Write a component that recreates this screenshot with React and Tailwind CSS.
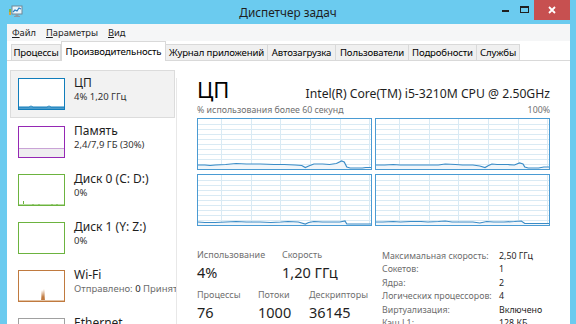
import React from 'react';

// точки графиков: [доля ширины, высота над низом в px]
const cpu1 = [[0,4],[0.04,4],[0.07,3.5],[0.1,4],[0.16,4.5],[0.22,5.5],[0.28,5],[0.36,5],[0.44,4.5],[0.5,4.5],[0.56,4],[0.6,3.5],[0.62,1.5],[0.64,3],[0.67,5],[0.72,5],[0.76,4.5],[0.8,5.5],[0.83,8],[0.845,7],[0.86,2],[0.88,1],[0.95,1],[0.97,1.5],[1,1.5]];
const cpu2 = [[0,4],[0.05,4],[0.1,4.5],[0.14,4],[0.2,4],[0.28,4],[0.36,4],[0.4,5],[0.46,4.5],[0.5,4],[0.56,4],[0.6,3],[0.63,1.5],[0.65,3.5],[0.67,5],[0.7,4.5],[0.76,4.5],[0.8,4],[0.83,6],[0.85,5],[0.86,2],[0.88,1],[0.94,1],[0.97,2],[1,2]];
const cpu3 = [[0,3],[0.04,2.5],[0.1,2.5],[0.16,3],[0.22,3.5],[0.28,3],[0.36,3],[0.42,2.5],[0.48,3],[0.52,3.5],[0.58,3],[0.62,1],[0.64,2.5],[0.67,3.5],[0.72,3],[0.78,3],[0.82,3],[0.85,4],[0.86,1],[0.9,1],[1,1]];
const cpu4 = [[0,3],[0.04,3],[0.1,3.5],[0.14,3],[0.2,3.5],[0.26,3.5],[0.3,3],[0.36,3.5],[0.4,4],[0.44,3],[0.5,3],[0.56,3],[0.6,2],[0.64,3.5],[0.68,3],[0.74,3],[0.8,3.5],[0.84,4],[0.86,1.5],[0.9,1.5],[1,1.5]];

const toPath = (pts, w, h) =>
  pts.map(([x, y], i) => `${i ? 'L' : 'M'}${(x * w).toFixed(1)},${(h - y).toFixed(1)}`).join(' ');

const BigGraph = ({ pts }) => {
  const w = 173, h = 50;
  const d = toPath(pts, w, h);
  return (
    <div className="h-[52px] border border-[#4a9bd3] bg-white">
      <svg width={w} height={h} className="block">
        {[5, 10, 15, 20, 25, 30, 35, 40, 45].map((y) => (
          <line key={y} x1="0" x2={w} y1={y + 0.5} y2={y + 0.5} stroke="#d9eaf4" />
        ))}
        {[23, 53, 82, 112, 142, 171].map((x) => (
          <line key={x} x1={x + 0.5} x2={x + 0.5} y1="0" y2={h} stroke="#d9eaf4" />
        ))}
        <path d={`${d} L${w},${h} L0,${h} Z`} fill="#f1f6fa" />
        <path d={d} fill="none" stroke="#3a8cc7" strokeWidth="1.2" />
      </svg>
    </div>
  );
};

const MiniGraph = ({ color, children }) => (
  <div className="w-[47px] h-[32px] shrink-0 border" style={{ borderColor: color }}>
    <svg width="45" height="30" className="block bg-white">{children}</svg>
  </div>
);

const SideItem = ({ graph, name, sub, selected }) => (
  <div
    className={`w-[165px] h-[48px] shrink-0 flex items-start pt-[7px] pl-[7px] border ${
      selected ? 'bg-[#f2f2f2] border-[#dcdcdc]' : 'border-transparent'
    }`}
  >
    {graph}
    <div className="ml-[9px] -mt-[3px] flex flex-col min-w-0">
      <span className="text-[12px] leading-[16px] text-[#1e1e1e] whitespace-nowrap">{name}</span>
      <span className="text-[9.5px] leading-[12px] text-[#333] whitespace-nowrap">{sub}</span>
    </div>
  </div>
);

const tabs = [
  ['Процессы', 'w-[50px]'],
  ['Производительность', 'w-[105px]'],
  ['Журнал приложений', 'w-[102px]'],
  ['Автозагрузка', 'w-[68px]'],
  ['Пользователи', 'w-[73px]'],
  ['Подробности', 'w-[68px]'],
  ['Службы', 'w-[43px]'],
];

const specs = [
  ['Максимальная скорость:', '2,50 ГГц'],
  ['Сокетов:', '1'],
  ['Ядра:', '2'],
  ['Логических процессоров:', '4'],
  ['Виртуализация:', 'Включено'],
  ['Кэш L1:', '128 КБ'],
];

const Stat = ({ label, value, w }) => (
  <div className={`${w} flex flex-col`}>
    <span className="text-[9px] leading-[12px] text-[#707070] whitespace-nowrap">{label}</span>
    <span className="mt-[1px] text-[14.5px] leading-[20px] text-[#1e1e1e] whitespace-nowrap">{value}</span>
  </div>
);

export default function App() {
  return (
    <div className="w-[576px] h-[324px] overflow-hidden bg-[#6bcbef] flex flex-col font-['Noto_Sans',sans-serif] text-black">
      {/* заголовок окна */}
      <div className="h-[24px] shrink-0 grid grid-cols-[1fr_auto_1fr] items-start">
        <div className="pl-[9px] pt-[5px]">
          <svg width="14" height="13" viewBox="0 0 14 13">
            <rect x="3" y="1" width="10" height="8" fill="#e8f4fb" stroke="#6f8797" />
            <path d="M4 7 L6 5 L8 6 L10 3 L12 4" fill="none" stroke="#2b7fc2" strokeWidth="1.2" />
            <rect x="6.5" y="9" width="3" height="2" fill="#8a9aa5" />
            <rect x="5" y="11" width="6" height="1" fill="#8a9aa5" />
            <rect x="0" y="4" width="2" height="3" fill="#79b84a" />
            <rect x="0" y="7" width="2" height="3" fill="#d9a441" />
          </svg>
        </div>
        <div className="pt-[3px] text-[11.8px] leading-[18px] text-[#1f1f1f]">Диспетчер задач</div>
        <div className="flex justify-end items-start pr-[6px]">
          <div className="w-[20px] h-[20px] flex items-center justify-center">
            <div className="w-[7px] h-[2px] bg-[#1f1f1f] mt-[2px]" />
          </div>
          <div className="w-[19px] h-[20px] flex items-center justify-center">
            <div className="w-[9px] h-[7px] border border-[#1f1f1f] border-t-2 -mt-[1px]" />
          </div>
          <div className="w-[36px] h-[20px] bg-[#c75050] flex items-center justify-center">
            <svg width="8" height="8" viewBox="0 0 8 8">
              <path d="M1 1 L7 7 M7 1 L1 7" stroke="#fff" strokeWidth="1.8" />
            </svg>
          </div>
        </div>
      </div>

      <div className="flex-1 min-h-0 ml-[7px] mr-[6px] bg-white flex flex-col">
        {/* меню */}
        <div className="h-[17px] shrink-0 bg-[#f5f6f7] flex items-center text-[9.3px] text-[#1e1e1e]">
          <span className="ml-[5px] w-[34px]"><u>Ф</u>айл</span>
          <span className="w-[62px]"><u>П</u>араметры</span>
          <span><u>В</u>ид</span>
        </div>

        {/* вкладки */}
        <div className="h-[20px] shrink-0 flex items-end pl-[4px] border-b border-[#d9d9d9]">
          {tabs.map(([t, w], i) =>
            i === 1 ? (
              <div
                key={t}
                className={`${w} h-[20px] -mb-px bg-white border border-b-0 border-[#d9d9d9] flex items-start justify-center pt-[2px] text-[9.6px] tracking-[-0.15px] leading-[15px] whitespace-nowrap`}
              >
                {t}
              </div>
            ) : (
              <div
                key={t}
                className={`${w} h-[16px] bg-[#f0f0f0] border-t border-r ${i === 0 ? 'border-l' : ''} border-[#d9d9d9] flex items-center justify-center text-[9.6px] tracking-[-0.15px] leading-[14px] whitespace-nowrap`}
              >
                {t}
              </div>
            )
          )}
        </div>

        {/* содержимое */}
        <div className="flex-1 min-h-0 flex">
          <div className="w-[169px] shrink-0 pt-[9px] pl-[3px] flex flex-col overflow-hidden">
            <SideItem
              selected
              name="ЦП"
              sub="4% 1,20 ГГц"
              graph={
                <MiniGraph color="#117dbb">
                  <path d="M0 28 L10 28 L12 27 L14 28 L28 28 L30 27 L32 28 L45 28" fill="none" stroke="#117dbb" strokeWidth="1" />
                  <path d="M0 29 L45 29" stroke="#117dbb" strokeWidth="1.5" />
                </MiniGraph>
              }
            />
            <SideItem
              name="Память"
              sub="2,4/7,9 ГБ (30%)"
              graph={
                <MiniGraph color="#9528b4">
                  <rect x="0" y="21" width="45" height="9" fill="#efeef0" />
                  <path d="M0 21.5 L45 21.5" stroke="#c9a3d6" strokeWidth="1" />
                </MiniGraph>
              }
            />
            <SideItem
              name="Диск 0 (C: D:)"
              sub="0%"
              graph={
                <MiniGraph color="#6cb33f">
                  <path d="M4 30 L4 26 L5 26 L5 30 Z" fill="#6cb33f" />
                  <path d="M0 29.5 L45 29.5" stroke="#b8dca0" strokeWidth="1" />
                  <path d="M14 30 L14 29 M20 30 L20 29 M33 30 L33 29 M38 30 L38 29" stroke="#6cb33f" />
                </MiniGraph>
              }
            />
            <SideItem name="Диск 1 (Y: Z:)" sub="0%" graph={<MiniGraph color="#6cb33f" />} />
            <SideItem
              name="Wi-Fi"
              sub={
                <>
                  <span className="text-[#6d6d6d]">Отправлено: </span>
                  <span className="text-[#1e1e1e]">0</span>
                  <span className="text-[#6d6d6d]"> Принято: 0 Кбит/с</span>
                </>
              }
              graph={
                <MiniGraph color="#c07a3f">
                  <path d="M22 30 L23 19 L24 26 L25 18 L26 30 Z" fill="#c07a3f" />
                  <path d="M0 29.5 L45 29.5" stroke="#e3c3a5" strokeWidth="1" />
                </MiniGraph>
              }
            />
            <SideItem name="Ethernet" sub="Не подключено" graph={<MiniGraph color="#a0a0a0" />} />
          </div>

          <div className="w-px shrink-0 bg-[#e8e8e8] mt-[17px]" />

          <div className="flex-1 min-w-0 pl-[20px] pr-[20px] flex flex-col">
            <div className="mt-[15px] flex items-baseline justify-between">
              <span className="text-[22px] leading-[26px] text-black">ЦП</span>
              <span className="text-[12.2px] leading-[16px] text-[#1e1e1e]">Intel(R) Core(TM) i5-3210M CPU @ 2.50GHz</span>
            </div>
            <div className="mt-[2px] flex justify-between text-[8.8px] leading-[12px] text-[#707070]">
              <span>% использования более 60 секунд</span>
              <span>100%</span>
            </div>
            <div className="mt-[2px] w-[353px] grid grid-cols-2 gap-x-[3px] gap-y-[4px]">
              <BigGraph pts={cpu1} />
              <BigGraph pts={cpu2} />
              <BigGraph pts={cpu3} />
              <BigGraph pts={cpu4} />
            </div>

            <div className="mt-[23px] flex">
              <div className="w-[185px] shrink-0 flex flex-col">
                <div className="flex">
                  <Stat w="w-[85px]" label="Использование" value="4%" />
                  <Stat w="" label="Скорость" value="1,20 ГГц" />
                </div>
                <div className="flex mt-[7px]">
                  <Stat w="w-[61px]" label="Процессы" value="76" />
                  <Stat w="w-[51px]" label="Потоки" value="1000" />
                  <Stat w="" label="Дескрипторы" value="36145" />
                </div>
              </div>
              <div className="flex flex-col mt-[1px]">
                {specs.map(([k, v]) => (
                  <div key={k} className="flex h-[13.4px] items-center text-[8.8px] whitespace-nowrap">
                    <span className="w-[117px] text-[#6d6d6d]">{k}</span>
                    <span className="text-[#1e1e1e]">{v}</span>
                  </div>
                ))}
              </div>
            </div>
          </div>
        </div>
      </div>
    </div>
  );
}
